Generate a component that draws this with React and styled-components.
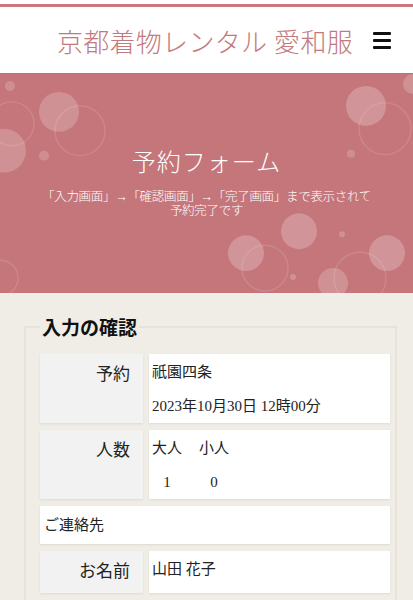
import React from 'react';
import styled, { createGlobalStyle } from 'styled-components';

const GlobalStyle = createGlobalStyle`
  html, body {
    margin: 0;
    padding: 0;
    background: #f0ede6;
  }
  body {
    font-family: "Liberation Serif", "Noto Sans CJK JP", serif;
    color: #222;
  }
  * { box-sizing: border-box; }
`;

const Header = styled.header`
  background: #fff;
  padding-top: 4px;
`;

const HeaderInner = styled.div`
  border-top: 3px solid #c8797c;
  height: 69px;
  display: flex;
  align-items: center;
  justify-content: flex-end;
  padding-right: 22px;
  gap: 20px;
`;

const SiteTitle = styled.h1`
  margin: 0;
  font-size: 26px;
  font-weight: 300;
  letter-spacing: 0.3px;
  color: #c27a7d;
`;

const MenuButton = styled.button`
  width: 18px;
  height: 17px;
  padding: 0;
  border: none;
  background: transparent;
  display: flex;
  flex-direction: column;
  justify-content: space-between;
  cursor: pointer;

  span {
    display: block;
    height: 3px;
    background: #111;
    border-radius: 1px;
  }
`;

const Hero = styled.section`
  position: relative;
  height: 220px;
  background: #c5767b;
  border-top: 1px solid #c26f74;
  overflow: hidden;
  display: flex;
  flex-direction: column;
  align-items: center;
  justify-content: center;
  color: #fff;
  text-align: center;
  padding-bottom: 6px;
`;

const HeroDeco = styled.svg`
  position: absolute;
  inset: 0;
  width: 100%;
  height: 100%;
`;

const HeroTitle = styled.h2`
  position: relative;
  margin: 0 0 12px;
  font-size: 24px;
  font-weight: 300;
  letter-spacing: 1px;
`;

const HeroText = styled.p`
  position: relative;
  margin: 0;
  font-size: 12.5px;
  line-height: 14px;
  font-weight: 300;
  letter-spacing: -0.3px;
  padding: 0 24px;
`;

const Main = styled.main`
  padding: 20px 16px 20px 24px;
`;

const Fieldset = styled.fieldset`
  margin: 0;
  padding: 14px 5px 16px 14px;
  border: 2px solid #e7e3db;
  min-width: 0;
`;

const Legend = styled.legend`
  padding: 0 2px;
  font-size: 19px;
  font-weight: bold;
  color: #111;
`;

const Rows = styled.div`
  display: flex;
  flex-direction: column;
  gap: 7px;
`;

const Row = styled.div`
  display: grid;
  grid-template-columns: ${p => (p.full ? '1fr' : '103px 1fr')};
  gap: 6px;
`;

const Label = styled.div`
  background: #f2f2f2;
  padding: 8px 13px 8px 0;
  text-align: right;
  font-size: 17px;
  line-height: 26px;
  box-shadow: 0 1px 2px rgba(0, 0, 0, 0.08);
`;

const Value = styled.div`
  background: #fff;
  padding: ${p => (p.full ? '6px 4px' : '1px 3px 0')};
  font-size: 15px;
  line-height: ${p => (p.full ? '26px' : '34px')};
  box-shadow: 0 1px 2px rgba(0, 0, 0, 0.08);
`;

const Counts = styled.div`
  display: grid;
  grid-template-columns: auto auto;
  justify-content: start;
  column-gap: 17px;

  span:nth-child(n + 3) {
    text-align: center;
  }
`;

const circles = [
  { cx: 10, cy: 12, r: 5, fill: 0.18 },
  { cx: 59, cy: 38, r: 20, fill: 0.2 },
  { cx: 80, cy: 57, r: 25, ring: true },
  { cx: 4, cy: 77, r: 22, fill: 0.2 },
  { cx: 12, cy: 50, r: 22, ring: true },
  { cx: 44, cy: 82, r: 5, fill: 0.18 },
  { cx: 366, cy: 32, r: 20, fill: 0.22 },
  { cx: 385, cy: 55, r: 26, ring: true },
  { cx: 413, cy: 10, r: 10, fill: 0.2 },
  { cx: 351, cy: 80, r: 4, fill: 0.18 },
  { cx: 299, cy: 158, r: 18, fill: 0.22 },
  { cx: 246, cy: 180, r: 18, fill: 0.22 },
  { cx: 265, cy: 195, r: 23, ring: true },
  { cx: 342, cy: 161, r: 3, fill: 0.2 },
  { cx: 387, cy: 180, r: 18, fill: 0.22 },
  { cx: 360, cy: 205, r: 26, ring: true },
  { cx: 333, cy: 210, r: 15, fill: 0.2 },
  { cx: 293, cy: 204, r: 3, fill: 0.2 },
  { cx: 0, cy: 205, r: 18, ring: true }
];

export default function App() {
  return (
    <>
      <GlobalStyle />
      <Header>
        <HeaderInner>
          <SiteTitle>京都着物レンタル 愛和服</SiteTitle>
          <MenuButton aria-label="menu">
            <span />
            <span />
            <span />
          </MenuButton>
        </HeaderInner>
      </Header>

      <Hero>
        <HeroDeco viewBox="0 0 413 220" preserveAspectRatio="none">
          {circles.map((c, i) =>
            c.ring ? (
              <circle key={i} cx={c.cx} cy={c.cy} r={c.r} fill="none" stroke="rgba(255,255,255,0.12)" strokeWidth="1.5" />
            ) : (
              <circle key={i} cx={c.cx} cy={c.cy} r={c.r} fill={`rgba(255,255,255,${c.fill})`} />
            )
          )}
        </HeroDeco>
        <HeroTitle>予約フォーム</HeroTitle>
        <HeroText>
          「入力画面」→「確認画面」→「完了画面」まで表示されて
          <br />
          予約完了です
        </HeroText>
      </Hero>

      <Main>
        <Fieldset>
          <Legend>入力の確認</Legend>
          <Rows>
            <Row>
              <Label>予約</Label>
              <Value>
                <div>祇園四条</div>
                <div>2023年10月30日 12時00分</div>
              </Value>
            </Row>
            <Row>
              <Label>人数</Label>
              <Value>
                <Counts>
                  <span>大人</span>
                  <span>小人</span>
                  <span>1</span>
                  <span>0</span>
                </Counts>
              </Value>
            </Row>
            <Row full>
              <Value full>ご連絡先</Value>
            </Row>
            <Row>
              <Label>お名前</Label>
              <Value>山田 花子</Value>
            </Row>
          </Rows>
        </Fieldset>
      </Main>
    </>
  );
}
